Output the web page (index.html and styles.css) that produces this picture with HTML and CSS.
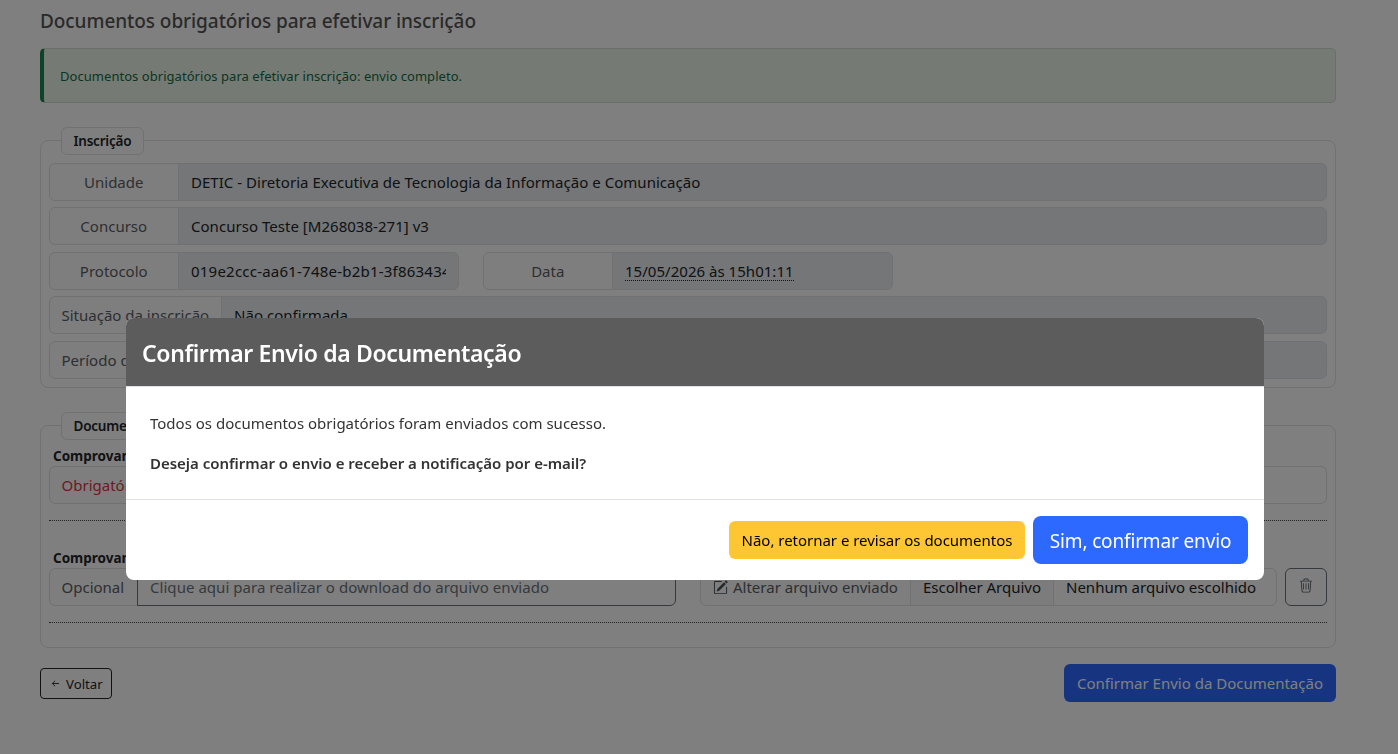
FILE: index.html
```html
<!DOCTYPE html>
<html lang="pt-BR">
<head>
<meta charset="utf-8">
<title>Documentos obrigatórios</title>
<link rel="stylesheet" href="styles.css">
</head>
<body>
<main class="page">
  <h1 class="title"><span>Documentos obrigatórios para efetivar inscrição</span></h1>
  <div class="alert"><span>Documentos obrigatórios para efetivar inscrição: envio completo.</span></div>

  <section class="panel panel-info">
    <h2 class="legend"><span>Inscrição</span></h2>
    <div class="rows">
      <div class="group"><span class="label fixed">Unidade</span><span class="value"><span>DETIC - Diretoria Executiva de Tecnologia da Informação e Comunicação</span></span></div>
      <div class="group"><span class="label fixed">Concurso</span><span class="value"><span>Concurso Teste [M268038-271] v3</span></span></div>
      <div class="pair">
        <div class="group"><span class="label fixed">Protocolo</span><span class="value"><span class="clip">019e2ccc-aa61-748e-b2b1-3f863434</span></span></div>
        <div class="group"><span class="label fixed">Data</span><span class="value"><span class="dotted">15/05/2026 às 15h01:11</span></span></div>
      </div>
      <div class="group"><span class="label wide">Situação da inscrição</span><span class="value"><span>Não confirmada</span></span></div>
      <div class="group"><span class="label wide">Período de inscrição</span><span class="value"></span></div>
    </div>
  </section>

  <section class="panel panel-docs">
    <h2 class="legend"><span>Documentos</span></h2>
    <div class="doc">
      <h3 class="doc-name">Comprovante</h3>
      <div class="group"><span class="label required">Obrigatório</span><span class="value plain"></span></div>
    </div>
    <div class="doc">
      <h3 class="doc-name">Comprovante</h3>
      <div class="doc-row">
        <div class="group download"><span class="label optional">Opcional</span><span class="value link"><span>Clique aqui para realizar o download do arquivo enviado</span></span></div>
        <div class="group upload">
          <span class="label change"><svg class="icon" viewBox="0 0 16 16"><path d="M15.502 1.94a.5.5 0 0 1 0 .706L14.459 3.69l-2-2L13.502.646a.5.5 0 0 1 .707 0zm-1.75 2.456-2-2L4.939 9.21a.5.5 0 0 0-.121.196l-.805 2.414a.25.25 0 0 0 .316.316l2.414-.805a.5.5 0 0 0 .196-.12z"/><path fill-rule="evenodd" d="M1 13.5A1.5 1.5 0 0 0 2.5 15h11a1.5 1.5 0 0 0 1.5-1.5v-6a.5.5 0 0 0-1 0v6a.5.5 0 0 1-.5.5h-11a.5.5 0 0 1-.5-.5v-11a.5.5 0 0 1 .5-.5H9a.5.5 0 0 0 0-1H2.5A1.5 1.5 0 0 0 1 2.5z"/></svg><span>Alterar arquivo enviado</span></span>
          <span class="choose"><span>Escolher Arquivo</span></span>
          <span class="file"><span>Nenhum arquivo escolhido</span></span>
        </div>
        <button class="trash" aria-label="Excluir"><svg class="icon bin" viewBox="0 0 16 16"><path d="M6.5 1h3a.5.5 0 0 1 .5.5v1H6v-1a.5.5 0 0 1 .5-.5M11 2.5v-1A1.5 1.5 0 0 0 9.5 0h-3A1.5 1.5 0 0 0 5 1.5v1H1.5a.5.5 0 0 0 0 1h.538l.853 10.66A2 2 0 0 0 4.885 16h6.23a2 2 0 0 0 1.994-1.84l.853-10.66h.538a.5.5 0 0 0 0-1zm1.958 1-.846 10.58a1 1 0 0 1-.997.92h-6.23a1 1 0 0 1-.997-.92L3.042 3.5zM5.5 5.5v7h-1v-7zm3 0v7h-1v-7zm3 0v7h-1v-7z"/></svg></button>
      </div>
    </div>
  </section>

  <div class="actions">
    <button class="back"><svg class="arrow" viewBox="0 0 10 10"><path d="M9 5H1.5M4.5 2 1.5 5l3 3"/></svg><span>Voltar</span></button>
    <button class="confirm"><span>Confirmar Envio da Documentação</span></button>
  </div>
</main>

<div class="backdrop">
  <div class="modal" role="dialog">
    <div class="modal-head"><span>Confirmar Envio da Documentação</span></div>
    <div class="modal-body">
      <p class="m-text"><span>Todos os documentos obrigatórios foram enviados com sucesso.</span></p>
      <p class="m-strong"><span>Deseja confirmar o envio e receber a notificação por e-mail?</span></p>
    </div>
    <div class="modal-foot">
      <button class="no"><span>Não, retornar e revisar os documentos</span></button>
      <button class="yes"><span>Sim, confirmar envio</span></button>
    </div>
  </div>
</div>
</body>
</html>
```
FILE: styles.css
```css
* { box-sizing: border-box; }
body {
  margin: 0;
  height: 754px;
  overflow: hidden;
  background: #fff;
  color: #212529;
  font: 15px/24px "Noto Sans", sans-serif;
  white-space: nowrap;
}
h1, h2, h3, p { margin: 0; }
button { font: inherit; padding: 0; background: none; white-space: nowrap; }
.page { width: 1296px; margin-left: 40px; padding-top: 9px; }
.title { height: 24px; font-size: 19px; font-weight: 550; line-height: 24px; letter-spacing: -.07px; color: #555; }
.alert {
  height: 55px; margin-top: 15px; padding-left: 16px;
  display: flex; align-items: center;
  border: 1px solid #d0dfd0; border-left: 4px solid #198754; border-radius: 5px;
  background: #ebf6e9; color: #146c43; font-size: 13px; letter-spacing: .045px;
}
.panel { border: 1px solid #dee2e6; border-radius: 8px; padding: 0 8px; }
.panel-info { height: 248px; margin-top: 37px; }
.panel-docs { height: 223px; margin-top: 37px; }
.legend {
  width: max-content; height: 28px; margin: -14px 0 0 12px; padding: 0 12px 0 11.5px;
  border: 1px solid #dee2e6; border-radius: 6px; background: #fff;
  font-size: 13.5px; font-weight: 600; line-height: 26px; letter-spacing: -.22px;
}
.rows { display: grid; grid-template-rows: 44px 45px 44px 45px 38px; align-items: start; margin-top: 8px; }
.group { display: flex; height: 38px; min-width: 0; }
.label, .value, .choose, .file { display: flex; align-items: center; border: 1px solid #dee2e6; padding: 0 12px; }
.label { flex: none; padding-left: 11.5px; border-radius: 6px 0 0 6px; background: #fcfcfc; color: #5a5f64; }
.fixed { width: 130px; justify-content: center; }
.wide { width: 173px; }
.value { flex: 1; min-width: 0; margin-left: -1px; border-radius: 0 6px 6px 0; background: #e9ecef; letter-spacing: .03px; }
.pair { display: grid; grid-template-columns: 410px 410px; gap: 24px; }
.clip { overflow: hidden; letter-spacing: .22px; }
.dotted { border-bottom: 1px dotted #212529; line-height: 18px; }
.plain { background: #fff; }
.doc { height: 102px; border-bottom: 1px dotted #444; }
.doc-name { height: 20px; margin: 0 0 0 4px; font-size: 13.5px; font-weight: 700; line-height: 20px; }
.legend + .doc { height: 81px; padding-top: 6px; }
.doc + .doc { padding-top: 27px; }
.required { width: 110px; color: #dc3545; }
.doc-row { display: flex; }
.download { width: 627px; }
.optional { width: 89px; }
.link { background: #fff; border-color: #6c757d; color: #6c757d; letter-spacing: .045px; }
.upload { width: 577px; margin: 0 8px 0 24px; }
.change { width: 211px; gap: 5px; padding: 0 0 0 12px; }
.choose { width: 144px; margin-left: -1px; background: #f8f9fa; }
.file { flex: 1; margin-left: -1px; border-radius: 0 6px 6px 0; }
.trash { width: 42px; height: 38px; display: grid; place-items: center; border: 1px solid #6c757d; border-radius: 6px; color: #6c757d; }
.icon { width: 15px; height: 15px; flex: none; fill: currentColor; }
.change .icon { color: #495057; }
.trash .icon { width: 14px; margin-top: -3px; color: #5a6268; }
.actions { display: flex; justify-content: space-between; align-items: center; height: 38px; margin-top: 16px; }
.back { display: flex; align-items: center; width: 72px; height: 31px; padding-left: 10px; gap: 6px; border: 1px solid #212529; border-radius: 4px; color: #212529; font-size: 13.2px; }
.back span { padding-top: 1px; }
.arrow { width: 9px; height: 9px; fill: none; stroke: currentColor; }
.confirm { width: 272px; height: 38px; border: 0; border-radius: 6px; background: #2d68ff; color: #fff; }
.backdrop { position: fixed; inset: 0; background: rgba(0,0,0,.5); }
.modal { width: 1138px; height: 262px; margin: 318px 0 0 126px; border-radius: 8px; background: #fff; overflow: hidden; }
.modal-head { height: 69px; padding: 2px 16px 0; display: flex; align-items: center; background: #5c5c5c; border-bottom: 1px solid #dee2e6; color: #fff; font-size: 23px; font-weight: 600; line-height: 32px; letter-spacing: -.35px; }
.modal-body { height: 112px; padding: 24px 24px; color: #333; display: grid; gap: 16px; align-content: start; }
.m-strong { font-weight: 600; letter-spacing: -.02px; }
.modal-foot { height: 81px; border-top: 1px solid #dee2e6; padding: 0 16px; display: flex; justify-content: flex-end; align-items: center; gap: 8px; }
.no { width: 296px; height: 38px; border: 0; border-radius: 6px; background: #ffc634; color: #000; letter-spacing: -.02px; }
.yes { width: 215px; height: 48px; padding-top: 1px; border: 0; border-radius: 8px; background: #2d68ff; color: #fff; font-size: 19px; letter-spacing: -.15px; }
```
